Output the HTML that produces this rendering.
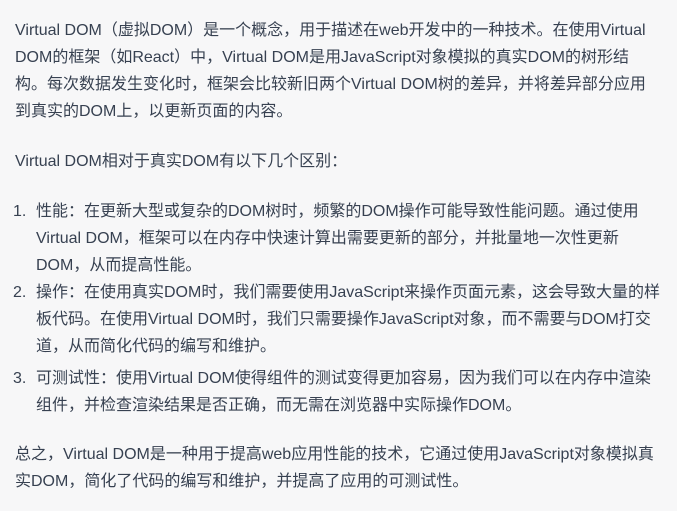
<!DOCTYPE html>
<html><head><meta charset="utf-8"><style>
body{margin:0;width:677px;height:511px;background:#f7f7f8;overflow:hidden;font-family:"Liberation Sans","Noto Sans CJK SC",sans-serif;font-size:16px;color:#374151}
.l{position:absolute;left:15px;height:27px;line-height:27px;white-space:nowrap}
.i{left:36px}
.n{position:absolute;left:13px;height:27px;line-height:27px}
</style></head><body>
<div class="l" style="top:17px">Virtual DOM（虚拟DOM）是一个概念，用于描述在web开发中的一种技术。在使用Virtual</div>
<div class="l" style="top:44px">DOM的框架（如React）中，Virtual DOM是用JavaScript对象模拟的真实DOM的树形结</div>
<div class="l" style="top:71px">构。每次数据发生变化时，框架会比较新旧两个Virtual DOM树的差异，并将差异部分应用</div>
<div class="l" style="top:98px">到真实的DOM上，以更新页面的内容。</div>
<div class="l" style="top:148px">Virtual DOM相对于真实DOM有以下几个区别：</div>
<div class="n" style="top:198px">1.</div>
<div class="l i" style="top:198px">性能：在更新大型或复杂的DOM树时，频繁的DOM操作可能导致性能问题。通过使用</div>
<div class="l i" style="top:225px">Virtual DOM，框架可以在内存中快速计算出需要更新的部分，并批量地一次性更新</div>
<div class="l i" style="top:252px">DOM，从而提高性能。</div>
<div class="n" style="top:279px">2.</div>
<div class="l i" style="top:279px">操作：在使用真实DOM时，我们需要使用JavaScript来操作页面元素，这会导致大量的样</div>
<div class="l i" style="top:306px">板代码。在使用Virtual DOM时，我们只需要操作JavaScript对象，而不需要与DOM打交</div>
<div class="l i" style="top:333px">道，从而简化代码的编写和维护。</div>
<div class="n" style="top:365px">3.</div>
<div class="l i" style="top:365px">可测试性：使用Virtual DOM使得组件的测试变得更加容易，因为我们可以在内存中渲染</div>
<div class="l i" style="top:392px">组件，并检查渲染结果是否正确，而无需在浏览器中实际操作DOM。</div>
<div class="l" style="top:441px">总之，Virtual DOM是一种用于提高web应用性能的技术，它通过使用JavaScript对象模拟真</div>
<div class="l" style="top:468px">实DOM，简化了代码的编写和维护，并提高了应用的可测试性。</div>
</body></html>
